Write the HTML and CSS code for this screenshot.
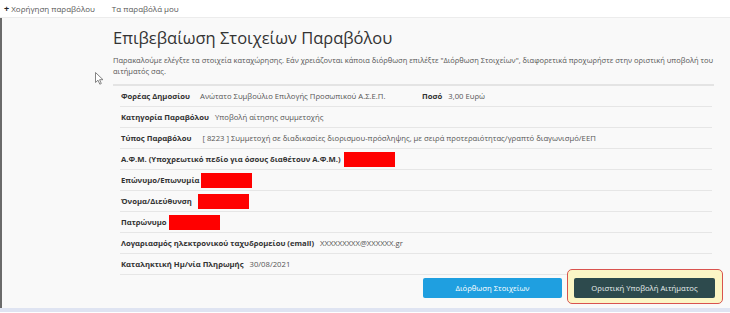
FILE: index.html
```html
<!DOCTYPE html>
<html lang="el">
<head>
<meta charset="utf-8">
<title>Επιβεβαίωση Στοιχείων Παραβόλου</title>
<link rel="stylesheet" href="styles.css">
</head>
<body>
<nav class="topnav">
  <a class="nav-link"><span class="plus">+</span> Χορήγηση παραβόλου</a>
  <a class="nav-link">Τα παραβόλά μου</a>
</nav>
<main class="page">
  <svg class="cursor" width="9" height="13" viewBox="0 0 9 13"><path d="M0.5 0.5 L0.5 10.5 L3 8.2 L4.8 12.2 L6.3 11.5 L4.6 7.7 L8 7.7 Z" fill="#fff" stroke="#777" stroke-width="0.9" stroke-linejoin="round"/></svg>
  <section class="panel">
    <h1 class="title">Επιβεβαίωση Στοιχείων Παραβόλου</h1>
    <p class="intro">Παρακαλούμε ελέγξτε τα στοιχεία καταχώρησης. Εάν χρειάζονται κάποια διόρθωση επιλέξτε "Διόρθωση Στοιχείων", διαφορετικά προχωρήστε στην οριστική υποβολή του αιτήματός σας.</p>
    <hr class="divider">
    <div class="rows">
      <div class="row split">
        <div class="cell first"><b>Φορέας Δημοσίου</b><span class="val wide">Ανώτατο Συμβούλιο Επιλογής Προσωπικού Α.Σ.Ε.Π.</span></div>
        <div class="cell"><b>Ποσό</b><span class="val">3,00 Ευρώ</span></div>
      </div>
      <div class="row"><b>Κατηγορία Παραβόλου</b><span class="val">Υποβολή αίτησης συμμετοχής</span></div>
      <div class="row"><b>Τύπος Παραβόλου</b><span class="val mid">[ 8223 ] Συμμετοχή σε διαδικασίες διορισμου-πρόσληψης, με σειρά προτεραιότητας/γραπτό διαγωνισμό/ΕΕΠ</span></div>
      <div class="row"><b>Α.Φ.Μ. (Υποχρεωτικό πεδίο για όσους διαθέτουν Α.Φ.Μ.)</b><span class="redact r4"></span></div>
      <div class="row"><b>Επώνυμο/Επωνυμία</b><span class="redact r1"></span></div>
      <div class="row"><b>Όνομα/Διεύθυνση</b><span class="redact r6"></span></div>
      <div class="row"><b>Πατρώνυμο</b><span class="redact r2"></span></div>
      <div class="row"><b>Λογαριασμός ηλεκτρονικού ταχυδρομείου (email)</b><span class="val">XXXXXXXXX@XXXXXX.gr</span></div>
      <div class="row"><b>Καταληκτική Ημ/νία Πληρωμής</b><span class="val">30/08/2021</span></div>
    </div>
    <div class="actions">
      <button class="btn btn-edit">Διόρθωση Στοιχείων</button>
      <div class="highlight">
        <button class="btn btn-submit">Οριστική Υποβολή Αιτήματος</button>
      </div>
    </div>
  </section>
</main>
<div class="bottom-strip"></div>
</body>
</html>
```

FILE: styles.css
```css
* { box-sizing: border-box; }
html, body { margin: 0; padding: 0; }
body {
  width: 730px;
  height: 313px;
  overflow: hidden;
  font-family: "Open Sans", "Noto Sans", "DejaVu Sans", sans-serif;
  color: #333;
  background: #fff;
}
.topnav {
  height: 18px;
  display: flex;
  align-items: center;
  gap: 17px;
  padding-left: 4px;
  background: #fff;
  font-size: 8px;
  color: #555;
  border-bottom: 1px solid #ececec;
}
.nav-link { color: #555; text-decoration: none; }
.plus { color: #222; font-weight: 700; font-size: 9px; }
.page {
  position: relative;
  height: 290px;
  background: #f9f9f9;
  border-left: 2px solid #6b6b6b;
  padding: 0 16px 0 111px;
}
.cursor { position: absolute; left: 93px; top: 54px; }
.panel { width: 601px; }
.title {
  margin: 0;
  padding-top: 9px;
  font-size: 16.5px;
  font-weight: 400;
  color: #333;
  line-height: 22px;
}
.intro {
  margin: 6px -6px 0 0;
  font-size: 7.5px;
  line-height: 10.5px;
  color: #555;
}
.divider {
  margin: 8px 0 0;
  border: 0;
  height: 2px;
  background: #e4e4e4;
}
.rows {
  margin-left: 7px;
  width: 592px;
}
.row {
  height: 21px;
  display: flex;
  align-items: center;
  padding-left: 1px;
  border-bottom: 1px solid #e6e6e6;
  font-size: 7.7px;
  color: #555;
}
.row b { color: #333; font-weight: 700; }
.val { margin-left: 6px; }
.val.wide { margin-left: 10px; }
.val.mid { margin-left: 11px; }
.cell { display: flex; align-items: center; }
.cell.first { width: 301px; }
.redact {
  display: inline-block;
  width: 51px;
  height: 15px;
  background: #f00;
}
.r1 { margin-left: 1px; }
.r2 { margin-left: 2px; }
.r4 { margin-left: 3px; }
.r6 { margin-left: 6px; }
.actions {
  display: flex;
  justify-content: flex-end;
  align-items: flex-start;
  gap: 5px;
  margin-top: -6px;
  margin-right: -9px;
}
.btn {
  height: 20px;
  border: none;
  border-radius: 2px;
  font-family: inherit;
  font-size: 7.7px;
  color: #fff;
  padding: 0;
}
.btn-edit { width: 139px; background: #1f9fe0; margin-top: 9px; }
.btn-submit { width: 141px; background: #2d4a4d; color: #e8eeee; display: block; }
.highlight {
  padding: 8px 7px 5px 6px;
  background: #fbf6c6;
  border: 1px solid #d9534f;
  border-radius: 5px;
}
.bottom-strip { height: 4px; background: #dfe4f2; }
```
